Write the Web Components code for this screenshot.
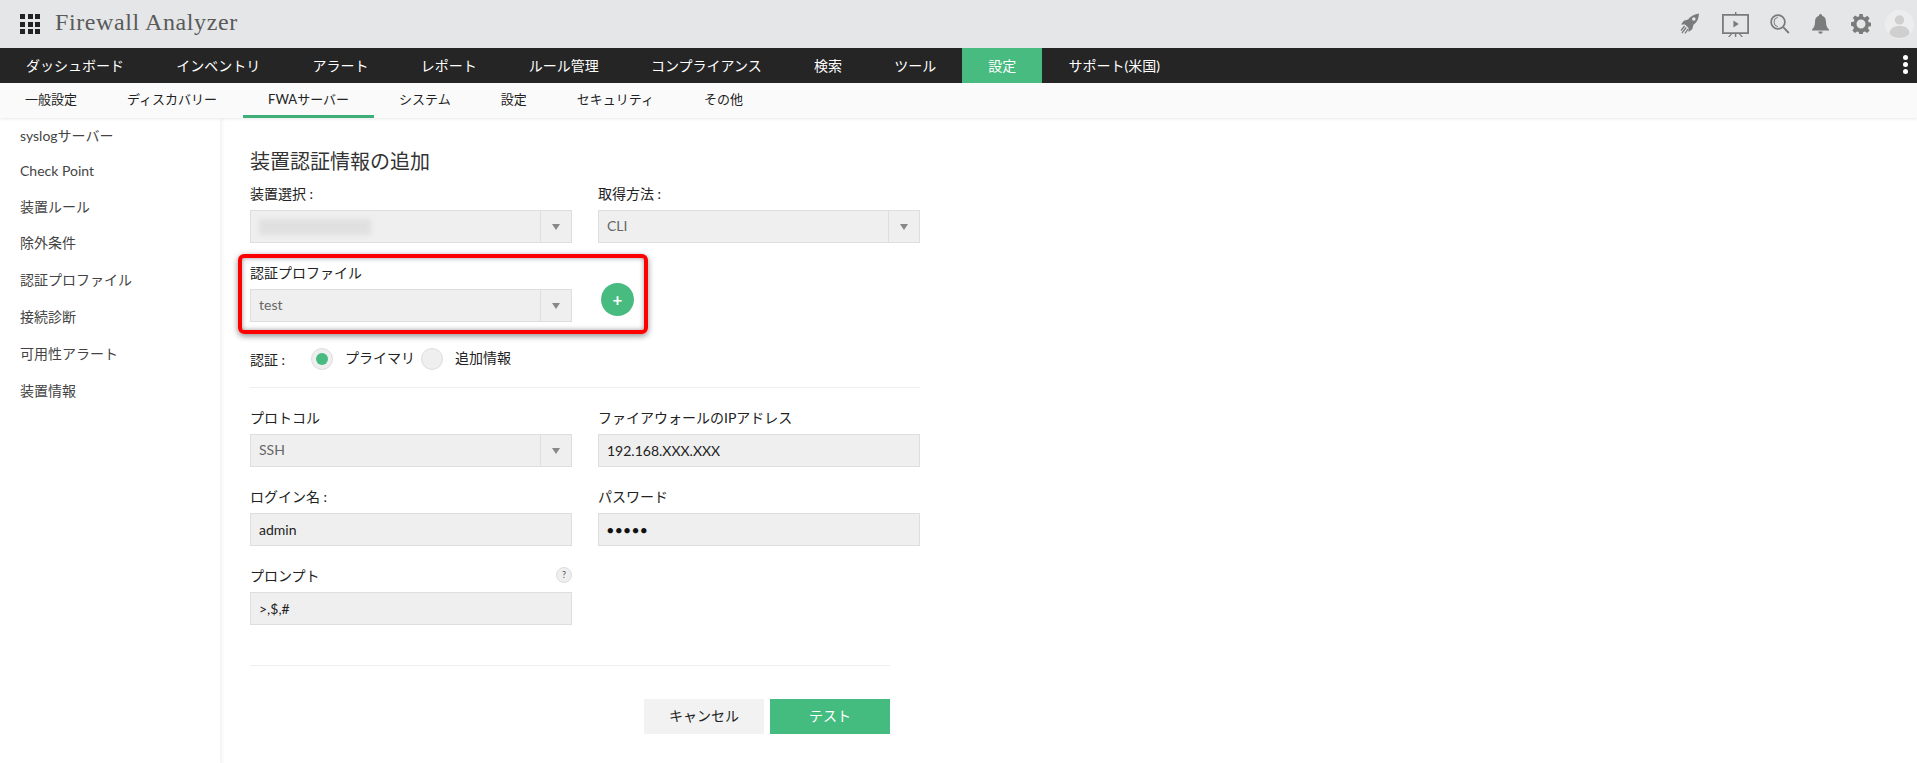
<!DOCTYPE html>
<html lang="ja">
<head>
<meta charset="utf-8">
<title>Firewall Analyzer</title>
<style>
  html, body { margin: 0; height: 100%; overflow: hidden; background: #fff; }
  body { font: 14px Lato, "Noto Sans CJK JP", sans-serif; color: #222; }
  fwa-page { height: 763px; }
</style>
</head>
<body>
<fwa-page>
  <fwa-header slot="top" title-text="Firewall Analyzer"></fwa-header>
  <fwa-nav slot="top" items='["ダッシュボード","インベントリ","アラート","レポート","ルール管理","コンプライアンス","検索","ツール","設定","サポート(米国)"]' active="8"></fwa-nav>
  <fwa-subnav slot="top" items='["一般設定","ディスカバリー","FWAサーバー","システム","設定","セキュリティ","その他"]' active="2"></fwa-subnav>
  <fwa-sidebar slot="side" items='["syslogサーバー","Check Point","装置ルール","除外条件","認証プロファイル","接続診断","可用性アラート","装置情報"]'></fwa-sidebar>
  <fwa-form>
    <fwa-title>装置認証情報の追加</fwa-title>
    <fwa-grid>
      <fwa-field label="装置選択 :" type="select" blurred></fwa-field>
      <fwa-field label="取得方法 :" type="select" value="CLI"></fwa-field>
    </fwa-grid>
    <fwa-highlight>
      <fwa-grid>
        <fwa-field label="認証プロファイル" type="select" value="test"></fwa-field>
        <fwa-add></fwa-add>
      </fwa-grid>
    </fwa-highlight>
    <fwa-radios label="認証 :" options='["プライマリ","追加情報"]' checked="0"></fwa-radios>
    <fwa-rule></fwa-rule>
    <fwa-grid>
      <fwa-field label="プロトコル" type="select" value="SSH"></fwa-field>
      <fwa-field label="ファイアウォールのIPアドレス" value="192.168.XXX.XXX"></fwa-field>
      <fwa-field label="ログイン名 :" value="admin"></fwa-field>
      <fwa-field label="パスワード" value="●●●●●" secret></fwa-field>
      <fwa-field label="プロンプト" value=">,$,#" help></fwa-field>
    </fwa-grid>
    <fwa-rule wide></fwa-rule>
    <fwa-actions>
      <fwa-button>キャンセル</fwa-button>
      <fwa-button primary>テスト</fwa-button>
    </fwa-actions>
  </fwa-form>
</fwa-page>

<script>
const define = (name, css, html, init) => {
  customElements.define(name, class extends HTMLElement {
    constructor() {
      super();
      this.attachShadow({ mode: "open" }).innerHTML = `<style>${css}</style>${html}`;
    }
    connectedCallback() {
      if (init) init(this, this.shadowRoot);
    }
  });
};
const list = (el) => JSON.parse(el.getAttribute("items") || "[]");

define("fwa-page", `
  :host { display: grid; grid-template-columns: 220px 1fr; grid-template-rows: auto 1fr; }
  .top { grid-column: 1 / 3; display: block; position: relative; z-index: 2; }
  .main { background: linear-gradient(to right, #f4f4f4, #fff 5px); min-width: 0; }
`, `<div class="top"><slot name="top"></slot></div><slot name="side"></slot><div class="main"><slot></slot></div>`);

define("fwa-header", `
  :host { display: flex; align-items: center; height: 48px; background: #e5e6e8; padding-left: 20px; box-sizing: border-box; }
  .apps { display: grid; grid-template-columns: repeat(3, 5px); gap: 2.5px; margin-right: 15px; }
  .apps i { width: 5px; height: 5px; background: #222; }
  .name { font: 24px "Liberation Serif", serif; letter-spacing: .6px; color: #5a5a5a; margin-top: -4px; }
  .icons { margin-left: auto; display: flex; align-items: center; height: 100%; margin-right: 3px; }
  svg { display: block; fill: #7b7b7b; }
`, `
  <div class="apps">${"<i></i>".repeat(9)}</div>
  <div class="name"></div>
  <div class="icons">
    <svg width="20" height="22" viewBox="0 0 20 22" style="margin-right:22px"><path d="M19 .5C14.500 1.200 10.500 3.200 8 6.500L3.800 7.800 1 11.500 5 11.500 8.500 15 8.500 19 12.200 16.200 13.500 11.800C17 9.500 18.800 5.500 19 .5Z"/><circle cx="13.800" cy="6" r="1.800" fill="#e5e6e8"/><path d="M4.600 13 1 17.500M6.200 14.500 2 20M8 16.200 5 20.500" stroke="#7b7b7b" stroke-width="1.300" fill="none"/></svg>
    <svg width="27" height="25" viewBox="0 0 27 25" style="margin-right:21px"><path d="M13 0h1.400v2H27v20H0V2h13zM1.800 3.800v16.400h23.400V3.800z" fill-rule="evenodd"/><path d="M11.400 8.400l5.400 3.600-5.400 3.600zM6 25l2.600-3h1.600L7.600 25zM21 25l-2.600-3h-1.600l2.600 3zM12.900 22h1.400v3h-1.400z"/></svg>
    <svg width="20" height="20" viewBox="0 0 20 20" style="margin-right:22px"><circle cx="8" cy="8" r="6.900" fill="none" stroke="#7b7b7b" stroke-width="1.700"/><path d="M7.800 3.300A4.800 4.800 0 0 0 7.800 12.700" fill="none" stroke="#7b7b7b" stroke-width="1"/><path d="M12.600 13.800l1.300-1.300 5.600 5.800-1.400 1.400z"/></svg>
    <svg width="17" height="20" viewBox="0 0 17 20" style="margin-right:22px"><path d="M8.500 0a1.600 1.600 0 0 1 1.600 1.700C13 2.500 14 5 14 8c0 3.500.8 5.400 3 7.400v1.100H0v-1.100C2.200 13.400 3 11.500 3 8c0-3 1-5.500 3.900-6.300A1.600 1.600 0 0 1 8.500 0zM6.300 17.500h4.400a2.200 2.200 0 0 1-4.400 0z"/></svg>
    <svg width="20" height="20" viewBox="0 0 20 20" style="margin-right:14px"><path fill-rule="evenodd" d="M8.300 0h3.400l.5 2.700 1.700.7 2.300-1.600 2.400 2.400-1.600 2.300.7 1.700 2.700.5v3.400l-2.700.5-.7 1.700 1.600 2.300-2.400 2.400-2.300-1.600-1.700.7-.5 2.700H8.300l-.5-2.700-1.700-.7-2.300 1.600-2.400-2.400 1.600-2.300-.7-1.700L0 11.700V8.300l2.700-.5.7-1.700-1.600-2.300 2.400-2.400 2.300 1.600 1.700-.7zM10 5.500a4.500 4.500 0 1 0 0 9 4.500 4.500 0 0 0 0-9z"/></svg>
    <svg width="29" height="29" viewBox="0 0 29 29"><circle cx="14.500" cy="14.500" r="14.500" fill="#ededed"/><circle cx="14.500" cy="10" r="4.700" fill="#cfcfcf"/><path d="M4.500 24c0-5.500 4-8 10-8s10 2.500 10 8c-2.500 2.500-6 4-10 4s-7.500-1.500-10-4z" fill="#cfcfcf"/></svg>
  </div>`,
  (el, root) => { root.querySelector(".name").textContent = el.getAttribute("title-text"); });

define("fwa-nav", `
  :host { display: flex; align-items: stretch; height: 35px; background: #252525; position: relative; }
  a { display: flex; align-items: center; padding: 0 26.1px; color: #fff; font-size: 14px; line-height: 1; }
  a:first-child { padding-left: 25px; }
  a.on { background: #48bb80; }
  .more { position: absolute; right: 9px; top: 7px; display: grid; gap: 2px; }
  .more i { width: 5px; height: 5px; border-radius: 50%; background: #fff; }
`, `<div class="more"><i></i><i></i><i></i></div>`,
  (el, root) => {
    list(el).forEach((text, i) => {
      const a = document.createElement("a");
      a.textContent = text;
      if (i == el.getAttribute("active")) a.className = "on";
      root.insertBefore(a, root.querySelector(".more"));
    });
  });

define("fwa-subnav", `
  :host { display: flex; height: 35px; background: #fafafa; box-shadow: 0 1px 3px #e8e8e8; }
  a { display: flex; align-items: center; padding: 0 25px 2px; color: #222; font-size: 13px; box-sizing: border-box; line-height: 1; }
  a.on { border-bottom: 3px solid #3fae78; padding: 1px 25px 1px; margin-left: 1px; }
`, ``,
  (el, root) => {
    list(el).forEach((text, i) => {
      const a = document.createElement("a");
      a.textContent = text;
      if (i == el.getAttribute("active")) a.className = "on";
      root.appendChild(a);
    });
  });

define("fwa-sidebar", `
  :host { display: block; padding-top: 1px; }
  a { display: block; padding-left: 20px; height: 36.8px; line-height: 33px; color: #444; font-size: 14px; }
  a:nth-child(-n+3) { height: 35.3px; }
`, ``,
  (el, root) => {
    list(el).forEach((text) => {
      const a = document.createElement("a");
      a.textContent = text;
      root.appendChild(a);
    });
  });

define("fwa-form", `:host { display: block; padding: 29px 0 0 30px; width: 670px; }`, `<slot></slot>`);
define("fwa-title", `:host { display: block; font-size: 20px; line-height: 28px; color: #333; margin-bottom: 9px; }`, `<slot></slot>`);
define("fwa-grid", `:host { display: grid; grid-template-columns: 322px 322px; column-gap: 26px; row-gap: 20px; }`, `<slot></slot>`);

define("fwa-field", `
  :host { display: block; }
  .label { display: flex; justify-content: space-between; align-items: center; height: 20px; box-sizing: border-box; padding-bottom: 2px; margin-bottom: 6px; font-size: 14px; color: #222; }
  .help { width: 14px; height: 14px; border: 1px solid #ddd; border-radius: 50%; background: #efefef; color: #555; font-size: 9px; line-height: 14px; text-align: center; }
  .box { display: flex; align-items: center; height: 33px; box-sizing: border-box; background: #efefef; border: 1.5px solid #dedede; font-size: 14px; }
  .value { flex: 1; padding: 0 0 1px 8px; white-space: nowrap; color: #222; }
  .select .value { padding-bottom: 2px; color: #666; }
  .secret { font-size: 11px; letter-spacing: 1.8px; color: #111; }
  .blur { width: 112px; height: 16px; margin: 2px 0 0 0; background: #e0e0e0; filter: blur(2.5px); }
  .arrow { width: 31px; height: 100%; box-sizing: border-box; border-left: 1px solid #dedede; display: flex; align-items: center; justify-content: center; }
  .arrow::after { content: ""; border: 4px solid transparent; border-top: 6px solid #888; border-bottom: 0; }
`, `<div class="label"><span class="text"></span></div><div class="box"><div class="value"></div></div>`,
  (el, root) => {
    root.querySelector(".text").textContent = el.getAttribute("label");
    const box = root.querySelector(".box");
    const value = root.querySelector(".value");
    value.textContent = el.getAttribute("value") || "";
    if (el.hasAttribute("secret")) value.classList.add("secret");
    if (el.hasAttribute("blurred")) value.innerHTML = `<div class="blur"></div>`;
    if (el.getAttribute("type") === "select") {
      box.classList.add("select");
      box.insertAdjacentHTML("beforeend", `<div class="arrow"></div>`);
    }
    if (el.hasAttribute("help")) {
      root.querySelector(".label").insertAdjacentHTML("beforeend", `<span class="help">?</span>`);
    }
  });

define("fwa-add", `
  :host { display: flex; align-self: end; width: 33px; height: 33px; margin: 0 0 6px 3px; border-radius: 50%; background: #48bb80; color: #fff; align-items: center; justify-content: center; font: bold 17px Lato, sans-serif; }
`, `+`);

define("fwa-highlight", `
  :host { display: block; position: relative; margin-top: 20px; }
  .mark { position: absolute; left: -12px; top: -9px; width: 410px; height: 80px; box-sizing: border-box; border: 4px solid #f00; border-radius: 6px; box-shadow: 0 2px 6px rgba(0,0,0,.45), inset 0 0 5px rgba(0,0,0,.4); pointer-events: none; }
`, `<slot></slot><div class="mark"></div>`);

define("fwa-radios", `
  :host { display: block; margin-top: 26px; }
  .row { display: flex; align-items: center; height: 22px; }
  .label { width: 61px; }
  .dot { width: 22px; height: 22px; box-sizing: border-box; border-radius: 50%; background: #efefef; border: 1px solid #ddd; display: flex; align-items: center; justify-content: center; }
  .dot.on::after { content: ""; width: 12px; height: 12px; border-radius: 50%; background: #48bb80; }
  .text { margin-left: 12px; margin-right: 6px; padding-bottom: 4px; }
`, `<div class="row"><div class="label"></div></div>`,
  (el, root) => {
    root.querySelector(".label").textContent = el.getAttribute("label");
    const row = root.querySelector(".row");
    JSON.parse(el.getAttribute("options")).forEach((text, i) => {
      const on = i == el.getAttribute("checked");
      row.insertAdjacentHTML("beforeend", `<div class="dot ${on ? "on" : ""}"></div><div class="text">${text}</div>`);
    });
  });

define("fwa-rule", `
  :host { display: block; height: 1px; background: #eee; margin: 17px 0 20px; }
  :host([wide]) { width: 640px; margin: 40px 0 33px; }
`, ``);

define("fwa-actions", `:host { display: flex; justify-content: flex-end; gap: 6px; width: 640px; }`, `<slot></slot>`);

define("fwa-button", `
  :host { display: flex; align-items: center; justify-content: center; width: 120px; height: 35px; box-sizing: border-box; padding-bottom: 3px; background: #f2f2f2; color: #222; font-size: 14px; }
  :host([primary]) { background: #45bc7f; color: #fff; }
`, `<slot></slot>`);
</script>
</body>
</html>
